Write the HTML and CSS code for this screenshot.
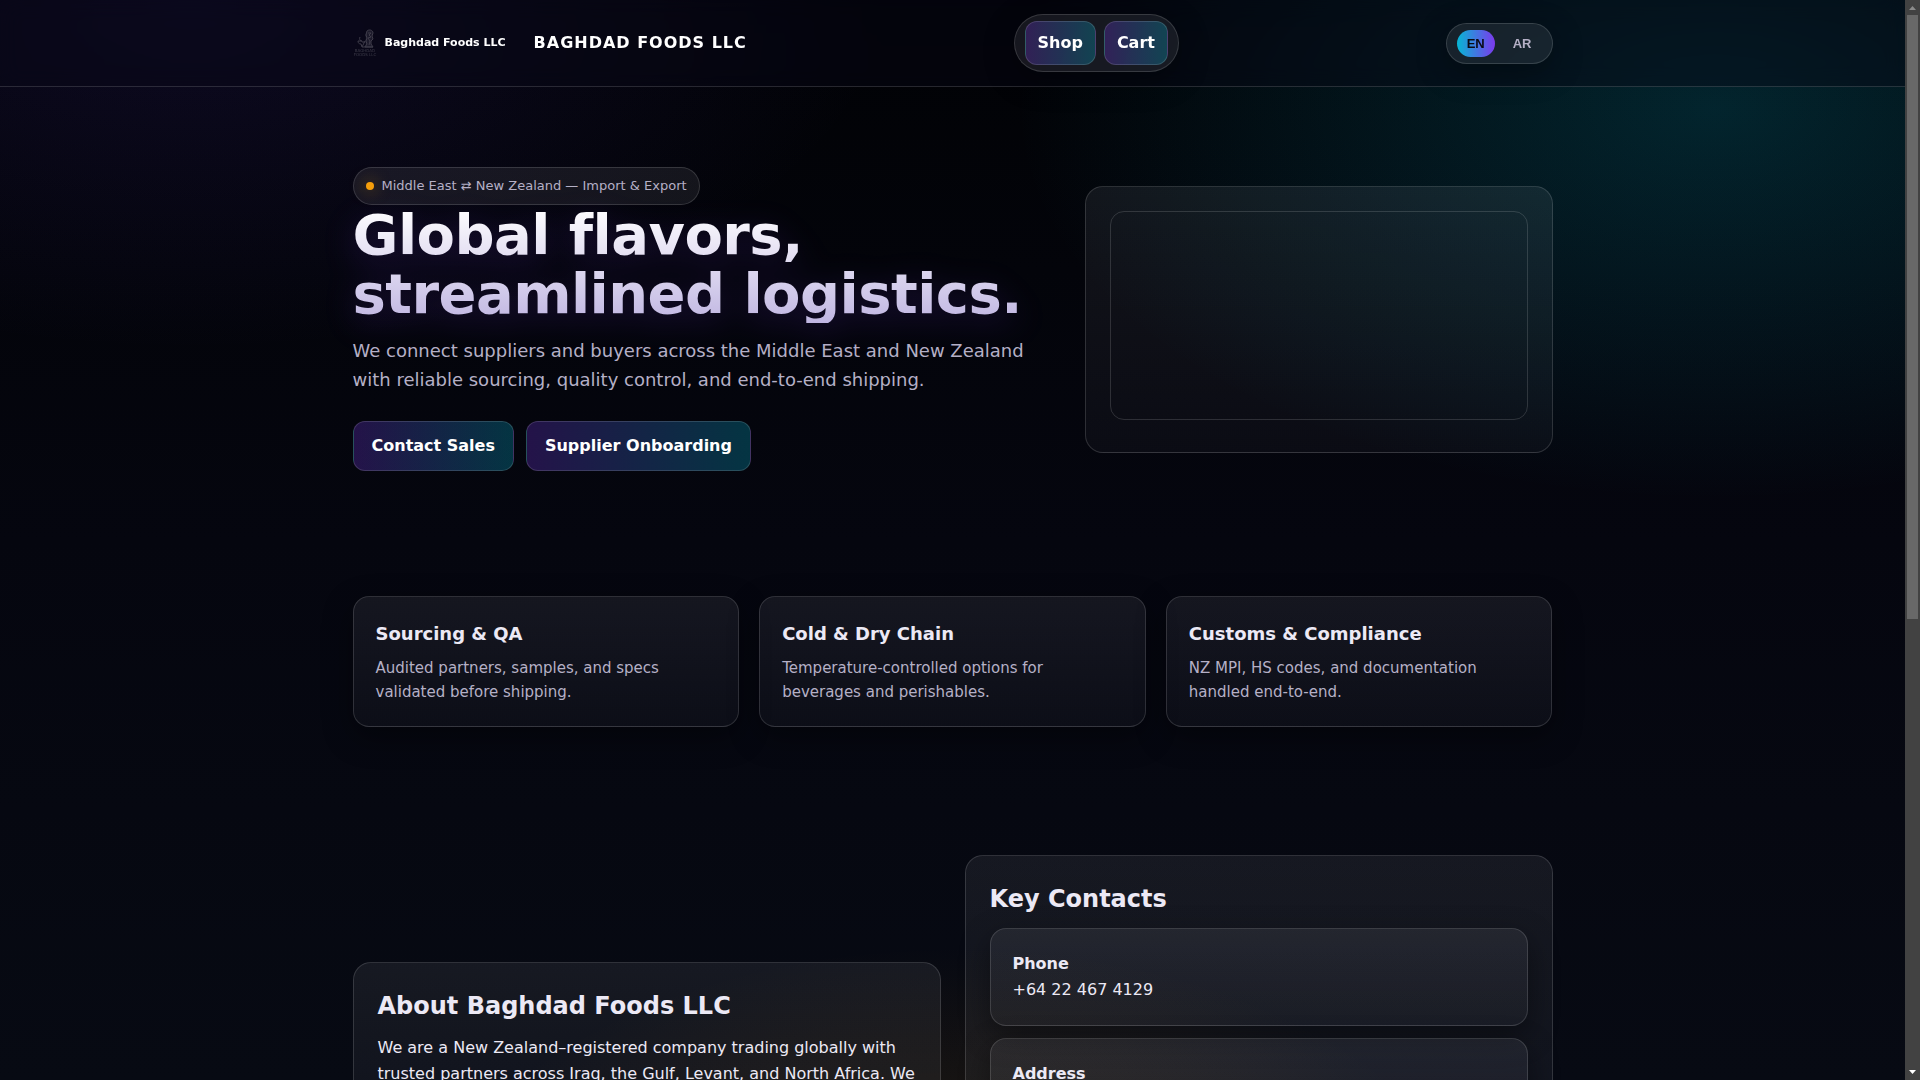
FILE: index.html
```html
<!DOCTYPE html>
<html lang="en">
<head>
    <meta charset="UTF-8">
    <meta name="viewport" content="width=device-width, initial-scale=1.0">
    <title>Baghdad Foods LLC</title>
    <link rel="stylesheet" href="styles.css">
</head>
<body>
    <div class="page">
        <header class="site-header">
            <div class="container header-inner">
                <a class="brand" href="#">
                    <span class="logo">
                        <svg class="logo-mark" viewBox="0 0 24 28" aria-hidden="true">
                            <path d="M14 2c2-2 6-1 6 2l-1 3 1 3-2 2 0 3 2 3h-9l2-3-1-3 1-3-1-3z" fill="currentColor" fill-opacity="0.4"/>
                            <g fill="none" stroke="currentColor" stroke-width="1">
                                <path d="M14 2c2-2 6-1 6 2l-1 3 1 3-2 2 0 3 2 3h-8l2-3-1-3 1-3-1-3z"/>
                                <path d="M15 4l3 0-2 2 2 2-3 1 2 3-1 4M12 12l-3 6M12 13l-3 0-1-2M7 8c-1 2 0 3 1 4l-3 0c0 2 1 3 3 3l1 3h11"/>
                            </g>
                            <text x="12" y="23" class="logo-caption">BAGHDAD</text>
                            <text x="12" y="27" class="logo-caption">FOODS LLC</text>
                        </svg>
                        <span class="logo-name">Baghdad Foods LLC</span>
                    </span>
                    <span class="brand-title">BAGHDAD FOODS LLC</span>
                </a>

                <nav class="nav">
                    <a class="btn btn-small" href="#shop">Shop</a>
                    <a class="btn btn-small" href="#cart">Cart</a>
                </nav>

                <div class="lang">
                    <button class="lang-btn active" data-lang="en">EN</button>
                    <button class="lang-btn" data-lang="ar">AR</button>
                </div>
            </div>
        </header>

        <main class="container">
            <section class="hero">
                <div class="hero-text">
                    <div class="badge"><span class="dot"></span>Middle East ⇄ New Zealand — Import &amp; Export</div>
                    <h1>Global flavors, streamlined logistics.</h1>
                    <p class="lead">We connect suppliers and buyers across the Middle East and New Zealand with reliable sourcing, quality control, and end-to-end shipping.</p>
                    <div class="cta">
                        <a class="btn" href="#contact">Contact Sales</a>
                        <a class="btn" href="#suppliers">Supplier Onboarding</a>
                    </div>
                </div>
                <div class="panel hero-panel">
                    <div class="hero-frame"></div>
                </div>
            </section>

            <section class="features">
                <article class="card">
                    <h3>Sourcing &amp; QA</h3>
                    <p>Audited partners, samples, and specs validated before shipping.</p>
                </article>
                <article class="card">
                    <h3>Cold &amp; Dry Chain</h3>
                    <p>Temperature-controlled options for beverages and perishables.</p>
                </article>
                <article class="card">
                    <h3>Customs &amp; Compliance</h3>
                    <p>NZ MPI, HS codes, and documentation handled end-to-end.</p>
                </article>
            </section>

            <section class="about" id="contact">
                <div class="panel">
                    <h2>About Baghdad Foods LLC</h2>
                    <p>We are a New Zealand–registered company trading globally with trusted partners across Iraq, the Gulf, Levant, and North Africa. We focus on quality, compliance, and on-time delivery for every shipment.</p>
                </div>
                <div class="panel">
                    <h2>Key Contacts</h2>
                    <div class="contacts">
                        <div class="card">
                            <strong>Phone</strong>
                            <div>+64 22 467 4129</div>
                        </div>
                        <div class="card">
                            <strong>Address</strong>
                            <div>New Zealand</div>
                        </div>
                        <div class="card">
                            <strong>Company</strong>
                            <div>Baghdad Foods LLC</div>
                        </div>
                    </div>
                </div>
            </section>
        </main>
    </div>

    <div class="scrollbar" aria-hidden="true">
        <svg class="arrow arrow-up" viewBox="0 0 7 4"><path d="M0 4L3.500 0 7 4z"/></svg>
        <div class="track"><div class="thumb"></div></div>
        <svg class="arrow arrow-down" viewBox="0 0 7 4"><path d="M0 0h7L3.500 4z"/></svg>
    </div>
</body>
</html>
```
FILE: styles.css
```css
:root {
    --text: #ece9f5;
    --muted: #b5b0c6;
    --line: rgba(255, 255, 255, 0.14);
    --purple: 124, 58, 237;
    --indigo: 96, 62, 225;
    --cyan: 6, 182, 212;
    --amber: 245, 158, 11;
}

* {
    box-sizing: border-box;
}

body {
    margin: 0;
    height: 100vh;
    display: grid;
    grid-template-columns: minmax(0, 1fr) 15px;
    background: #000;
    color: var(--text);
    font-family: "DejaVu Sans", sans-serif;
    font-size: 16px;
    line-height: 26px;
}

.page {
    height: 100vh;
    overflow-y: auto;
    scrollbar-width: none;
    background:
        radial-gradient(1000px 500px at 10% 0%, rgba(var(--indigo), 0.13), transparent 70%),
        radial-gradient(1000px 560px at 90% 10%, rgba(var(--cyan), 0.19), transparent 70%),
        radial-gradient(800px 500px at 50% 120%, rgba(var(--amber), 0.16), transparent 70%),
        linear-gradient(180deg, #010205 0%, #05060f 50%, #070a13 100%);
}

.container {
    max-width: 1200px;
    margin: 0 auto;
}

h1, h2, h3, p {
    margin: 0;
}

/* header */
.site-header {
    position: sticky;
    top: 0;
    z-index: 10;
    padding: 14px 0;
    background: rgba(7, 7, 22, 0.4);
    border-bottom: 1px solid var(--line);
    backdrop-filter: blur(10px);
}

.header-inner {
    display: flex;
    align-items: center;
    justify-content: space-between;
}

.brand {
    display: flex;
    align-items: center;
    gap: 28px;
    color: #fff;
    text-decoration: none;
}

.logo {
    display: flex;
    align-items: center;
    gap: 8px;
}

.logo-mark {
    width: 24px;
    height: 28px;
    color: #3f3c4a;
}

.logo-caption {
    font-size: 4px;
    text-anchor: middle;
    fill: currentColor;
}

.logo-name {
    font-size: 11px;
    font-weight: 700;
}

.brand-title {
    font-weight: 700;
    letter-spacing: 1px;
}

.nav,
.lang {
    display: flex;
    gap: 8px;
    padding: 6px 10px;
    border: 1px solid var(--line);
    border-radius: 999px;
    background: rgba(255, 255, 255, 0.08);
    box-shadow: 0 8px 30px rgba(0, 0, 0, 0.35);
}

.lang-btn {
    padding: 6px 10px;
    border: 0;
    border-radius: 999px;
    background: transparent;
    color: var(--muted);
    font: 700 13px/15px "Liberation Sans", Arial, sans-serif;
    cursor: pointer;
}

.lang-btn.active {
    background: linear-gradient(90deg, rgb(var(--cyan)), rgb(var(--purple)));
    color: #0a0a14;
}

.btn {
    padding: 11px 18px;
    border: 1px solid var(--line);
    border-radius: 12px;
    background: linear-gradient(90deg, rgba(var(--purple), 0.27), rgba(var(--cyan), 0.27));
    color: #fff;
    font-weight: 700;
    text-decoration: none;
}

.btn-small {
    padding: 8px 12px;
}

/* hero */
.hero {
    display: grid;
    grid-template-columns: 3fr 2fr;
    gap: 30px;
    align-items: center;
    padding: 80px 0;
}

.badge {
    display: inline-flex;
    align-items: center;
    gap: 8px;
    padding: 8px 12px;
    border: 1px solid var(--line);
    border-radius: 999px;
    background: rgba(255, 255, 255, 0.07);
    color: var(--muted);
    font-size: 13px;
    line-height: 20px;
    vertical-align: top;
}

.dot {
    width: 8px;
    height: 8px;
    border-radius: 50%;
    background: rgb(var(--amber));
    box-shadow: 0 0 16px rgba(var(--amber), 0.6);
}

h1 {
    font-size: 56px;
    line-height: 59px;
    letter-spacing: -0.01em;
    background: linear-gradient(180deg, #fff, #c0b6e2);
    -webkit-background-clip: text;
    background-clip: text;
    color: transparent;
    filter: drop-shadow(0 8px 16px rgba(var(--purple), 0.22));
}

.lead {
    margin-top: 13px;
    color: var(--muted);
    font-size: 18px;
    line-height: 29px;
}

.cta {
    display: flex;
    gap: 12px;
    margin-top: 27px;
}

.panel {
    padding: 24px;
    border: 1px solid var(--line);
    border-radius: 18px;
    background: linear-gradient(180deg, rgba(240, 240, 255, 0.07), rgba(240, 240, 255, 0.03));
}

.hero-panel {
    padding-bottom: 32px;
}

.hero-frame {
    aspect-ratio: 2;
    border: 1px solid var(--line);
    border-radius: 14px;
}

/* cards */
.features {
    display: grid;
    grid-template-columns: repeat(3, 1fr);
    gap: 20px;
    margin-top: 45px;
}

.card {
    padding: 22px;
    border: 1px solid var(--line);
    border-radius: 16px;
    background: linear-gradient(180deg, rgba(240, 240, 255, 0.07), rgba(240, 240, 255, 0.03));
    box-shadow: 0 10px 30px rgba(0, 0, 0, 0.4);
}

h3 {
    margin-bottom: 8px;
    font-size: 18px;
    line-height: 29px;
}

.card p {
    color: var(--muted);
    font-size: 15px;
    line-height: 24px;
}

/* about + contacts */
.about {
    display: grid;
    grid-template-columns: 1fr 1fr;
    gap: 24px;
    align-items: center;
    padding: 128px 0 80px;
}

h2 {
    margin-bottom: 10px;
    font-size: 24px;
    line-height: 38px;
}

.contacts {
    display: grid;
    gap: 12px;
}

/* scrollbar */
.scrollbar {
    display: flex;
    flex-direction: column;
    align-items: center;
    height: 100vh;
    padding: 6px 0;
    background: #424242;
}

.arrow {
    width: 7px;
    height: 4px;
}

.arrow-up {
    fill: #8b8b8b;
}

.arrow-down {
    fill: #fff;
}

.track {
    flex: 1;
    width: 11px;
    padding: 5px 0;
}

.thumb {
    height: calc(100% * 604 / 1050);
    background: #686868;
}
```
